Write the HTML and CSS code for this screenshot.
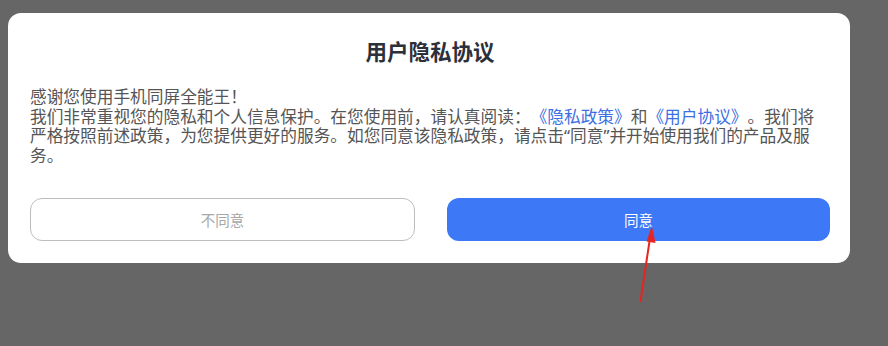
FILE: index.html
```html
<!DOCTYPE html>
<html lang="zh-CN">
<head>
<meta charset="utf-8">
<title>用户隐私协议</title>
<link rel="stylesheet" href="styles.css">
</head>
<body>
<div class="dialog">
  <h1 class="title">用户隐私协议</h1>
  <p class="content">感谢您使用手机同屏全能王！<br>我们非常重视您的隐私和个人信息保护。在您使用前，请认真阅读：<a class="link">《隐私政策》</a>和<a class="link">《用户协议》</a>。我们将严格按照前述政策，为您提供更好的服务。如您同意该隐私政策，请点击<span class="quote">“</span>同意<span class="quote">”</span>并开始使用我们的产品及服务。</p>
  <div class="actions">
    <button class="btn btn-outline">不同意</button>
    <button class="btn btn-primary">同意</button>
  </div>
</div>
<svg class="arrow" width="888" height="346" viewBox="0 0 888 346">
  <line x1="640.5" y1="301" x2="650" y2="238" stroke="#e82420" stroke-width="2" stroke-linecap="round"/>
  <polygon points="651.8,226 655.5,243 646.5,241.5" fill="#e82420"/>
</svg>
</body>
</html>
```
FILE: styles.css
```css
html, body {
  margin: 0;
  padding: 0;
}
body {
  background: #666666;
  width: 888px;
  height: 346px;
  overflow: hidden;
  font-family: "Noto Sans CJK SC", "Noto Sans", sans-serif;
  text-spacing-trim: space-all;
  padding-top: 13px;
  box-sizing: border-box;
}
.dialog {
  margin-left: 8px;
  width: 842px;
  height: 250px;
  box-sizing: border-box;
  background: #ffffff;
  border-radius: 13px;
  padding: 24px 20px 22px 22px;
  display: flex;
  flex-direction: column;
}
.title {
  margin: 0;
  font-size: 21.5px;
  line-height: 28px;
  font-weight: 700;
  color: #2c303b;
  text-align: center;
}
.content {
  margin: 22px 0 0 0;
  font-size: 16.7px;
  line-height: 19.5px;
  color: #555555;
  text-spacing-trim: space-all;
}
.quote {
  font-family: "Noto Sans", sans-serif;
}
.link {
  color: #3b6fe2;
}
.actions {
  margin-top: auto;
  display: flex;
  gap: 32px;
}
.btn {
  flex: 1;
  height: 43px;
  border-radius: 12px;
  font-family: "Noto Sans CJK SC", "Noto Sans", sans-serif;
  font-size: 14.5px;
  padding: 0;
  box-sizing: border-box;
}
.btn-outline {
  background: #ffffff;
  border: 1.5px solid #bdbdbd;
  color: #a8a8a8;
}
.btn-primary {
  background: #3d78f7;
  border: none;
  color: #ffffff;
}
.arrow {
  position: absolute;
  left: 0;
  top: 0;
  pointer-events: none;
}
```
